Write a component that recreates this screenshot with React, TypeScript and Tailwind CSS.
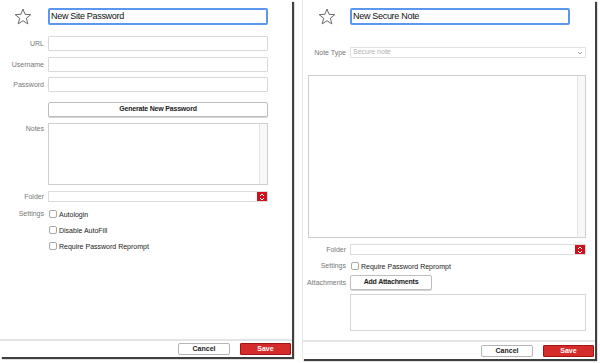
import type { ReactNode } from "react";

const font = { fontFamily: '"Liberation Sans", Arial, sans-serif' };

function StarIcon() {
  return (
    <svg width="18" height="17" viewBox="0 0 24 23" fill="none">
      <polygon
        points="12,1.5 14.8,8.6 22.5,9 16.5,13.9 18.5,21.5 12,17.2 5.5,21.5 7.5,13.9 1.5,9 9.2,8.6"
        stroke="#4a4a4a"
        strokeWidth="1.1"
        strokeLinejoin="miter"
      />
    </svg>
  );
}

function Stepper() {
  return (
    <div className="flex h-full w-[10px] items-center justify-center bg-[#d0101b]">
      <svg width="6" height="8" viewBox="0 0 6 8" fill="none">
        <path d="M1 3 L3 1 L5 3 M1 5 L3 7 L5 5" stroke="white" strokeWidth="1" />
      </svg>
    </div>
  );
}

function Row({
  label,
  labelWidth,
  className,
  top,
  labelLeading = "leading-[10px] pt-[1px]",
  children,
}: {
  label?: string;
  labelWidth: string;
  className: string;
  top?: boolean;
  labelLeading?: string;
  children: ReactNode;
}) {
  return (
    <div className={`flex ${top ? "items-start" : "items-center"} ${className}`}>
      <div className={`${labelWidth} shrink-0 text-right text-[7px] text-[#777] ${top ? labelLeading : "leading-[10px]"}`}>
        {label}
      </div>
      <div className="ml-[4px]">{children}</div>
    </div>
  );
}

function TextInput({ w }: { w: string }) {
  return <div className={`h-[15px] ${w} rounded-[1px] border border-[#d9d9d9] bg-white`} />;
}

function Check({ label }: { label: string }) {
  return (
    <div className="flex h-[16px] items-center">
      <div className="h-[8px] w-[8px] rounded-[2px] border border-[#a8a8a8] bg-white" />
      <span className="ml-[2px] text-[7px] leading-none text-[#222]">{label}</span>
    </div>
  );
}

function Footer({ pt }: { pt: string }) {
  return (
    <div className={`mt-auto flex justify-end gap-[10px] border-t-2 border-[#e4e4e4] ${pt} pb-[2px] pr-[1px]`}>
      <div className="flex h-[12px] w-[52px] items-center justify-center rounded-[2px] border border-[#b5b5b5] bg-white text-[7px] font-bold text-[#222]">
        Cancel
      </div>
      <div className="flex h-[12px] w-[51px] items-center justify-center rounded-[1px] border border-[#a51414] bg-[#d42b2b] text-[7px] font-bold text-white">
        Save
      </div>
    </div>
  );
}

function Title({ text }: { text: string }) {
  return (
    <div className="flex h-[17px] w-[220px] items-center rounded-[2px] border-2 border-[#5b97ec] bg-white px-[1px] text-[9px] tracking-[-0.3px] text-[#111]">
      {text}
    </div>
  );
}

function SitePanel() {
  return (
    <div className="flex h-[357px] w-[292px] flex-col bg-white shadow-[2px_2px_1px_rgba(0,0,0,0.75)]">
      <div className="mt-[8px] flex items-center">
        <div className="w-[48px] pl-[14px]">
          <StarIcon />
        </div>
        <Title text="New Site Password" />
      </div>

      <Row label="URL" labelWidth="w-[44px]" className="mt-[11px]">
        <TextInput w="w-[220px]" />
      </Row>
      <Row label="Username" labelWidth="w-[44px]" className="mt-[6px]">
        <TextInput w="w-[220px]" />
      </Row>
      <Row label="Password" labelWidth="w-[44px]" className="mt-[5px]">
        <TextInput w="w-[220px]" />
      </Row>
      <Row labelWidth="w-[44px]" className="mt-[10px]">
        <div className="flex h-[15px] w-[220px] items-center justify-center rounded-[2px] border border-[#bdbdbd] bg-white text-[7px] font-bold tracking-[-0.2px] text-[#222] shadow-[0_1px_0_#d5d5d5]">
          Generate New Password
        </div>
      </Row>
      <Row label="Notes" labelWidth="w-[44px]" className="mt-[6px]" top>
        <div className="flex h-[62px] w-[220px] justify-end border border-[#cfcfcf] bg-white">
          <div className="w-[8px] border-l border-[#e3e3e3] bg-[#f8f8f8]" />
        </div>
      </Row>
      <Row label="Folder" labelWidth="w-[44px]" className="mt-[6px]">
        <div className="flex h-[11px] w-[220px] justify-end border border-[#dcdcdc] bg-white">
          <Stepper />
        </div>
      </Row>
      <Row label="Settings" labelWidth="w-[44px]" className="mt-[4px]" top labelLeading="leading-[16px]">
        <div className="ml-[1px]">
          <Check label="Autologin" />
          <Check label="Disable AutoFill" />
          <Check label="Require Password Reprompt" />
        </div>
      </Row>

      <Footer pt="pt-[2px]" />
    </div>
  );
}

function NotePanel() {
  return (
    <div className="ml-[10px] flex h-[359px] w-[293px] flex-col border-l border-[#e6e6e6] bg-white shadow-[2px_2px_1px_rgba(0,0,0,0.75)]">
      <div className="mt-[8px] flex items-center">
        <div className="w-[47px] pl-[15px]">
          <StarIcon />
        </div>
        <Title text="New Secure Note" />
      </div>

      <Row label="Note Type" labelWidth="w-[43px]" className="mt-[22px]">
        <div className="flex h-[11px] w-[236px] items-center justify-between border border-[#e2e2e2] bg-white pl-[2px] pr-[2px] text-[7px] text-[#b0b0b0]">
          <span>Secure note</span>
          <svg width="6" height="4" viewBox="0 0 6 4" fill="none">
            <path d="M1 1 L3 3 L5 1" stroke="#999" strokeWidth="0.9" />
          </svg>
        </div>
      </Row>

      <div className="ml-[5px] mt-[17px] flex h-[163px] w-[278px] justify-end border border-[#cfcfcf] bg-white">
        <div className="w-[8px] border-l border-[#e3e3e3] bg-[#f8f8f8]" />
      </div>

      <Row label="Folder" labelWidth="w-[43px]" className="mt-[6px]">
        <div className="flex h-[11px] w-[236px] justify-end border border-[#dcdcdc] bg-white">
          <Stepper />
        </div>
      </Row>
      <Row label="Settings" labelWidth="w-[43px]" className="mt-[3px]">
        <div className="ml-[1px]">
          <Check label="Require Password Reprompt" />
        </div>
      </Row>
      <Row label="Attachments" labelWidth="w-[43px]" className="mt-[1px]">
        <div className="flex h-[15px] w-[82px] items-center justify-center rounded-[2px] border border-[#bdbdbd] bg-white text-[7px] font-bold tracking-[-0.2px] text-[#222] shadow-[0_1px_0_#d5d5d5]">
          Add Attachments
        </div>
      </Row>
      <Row labelWidth="w-[43px]" className="mt-[4px]">
        <div className="h-[37px] w-[236px] border border-[#d6d6d6] bg-white" />
      </Row>

      <Footer pt="pt-[3px]" />
    </div>
  );
}

export default function App() {
  return (
    <div className="flex h-[363px] w-[600px] items-start bg-white" style={font}>
      <SitePanel />
      <NotePanel />
    </div>
  );
}
